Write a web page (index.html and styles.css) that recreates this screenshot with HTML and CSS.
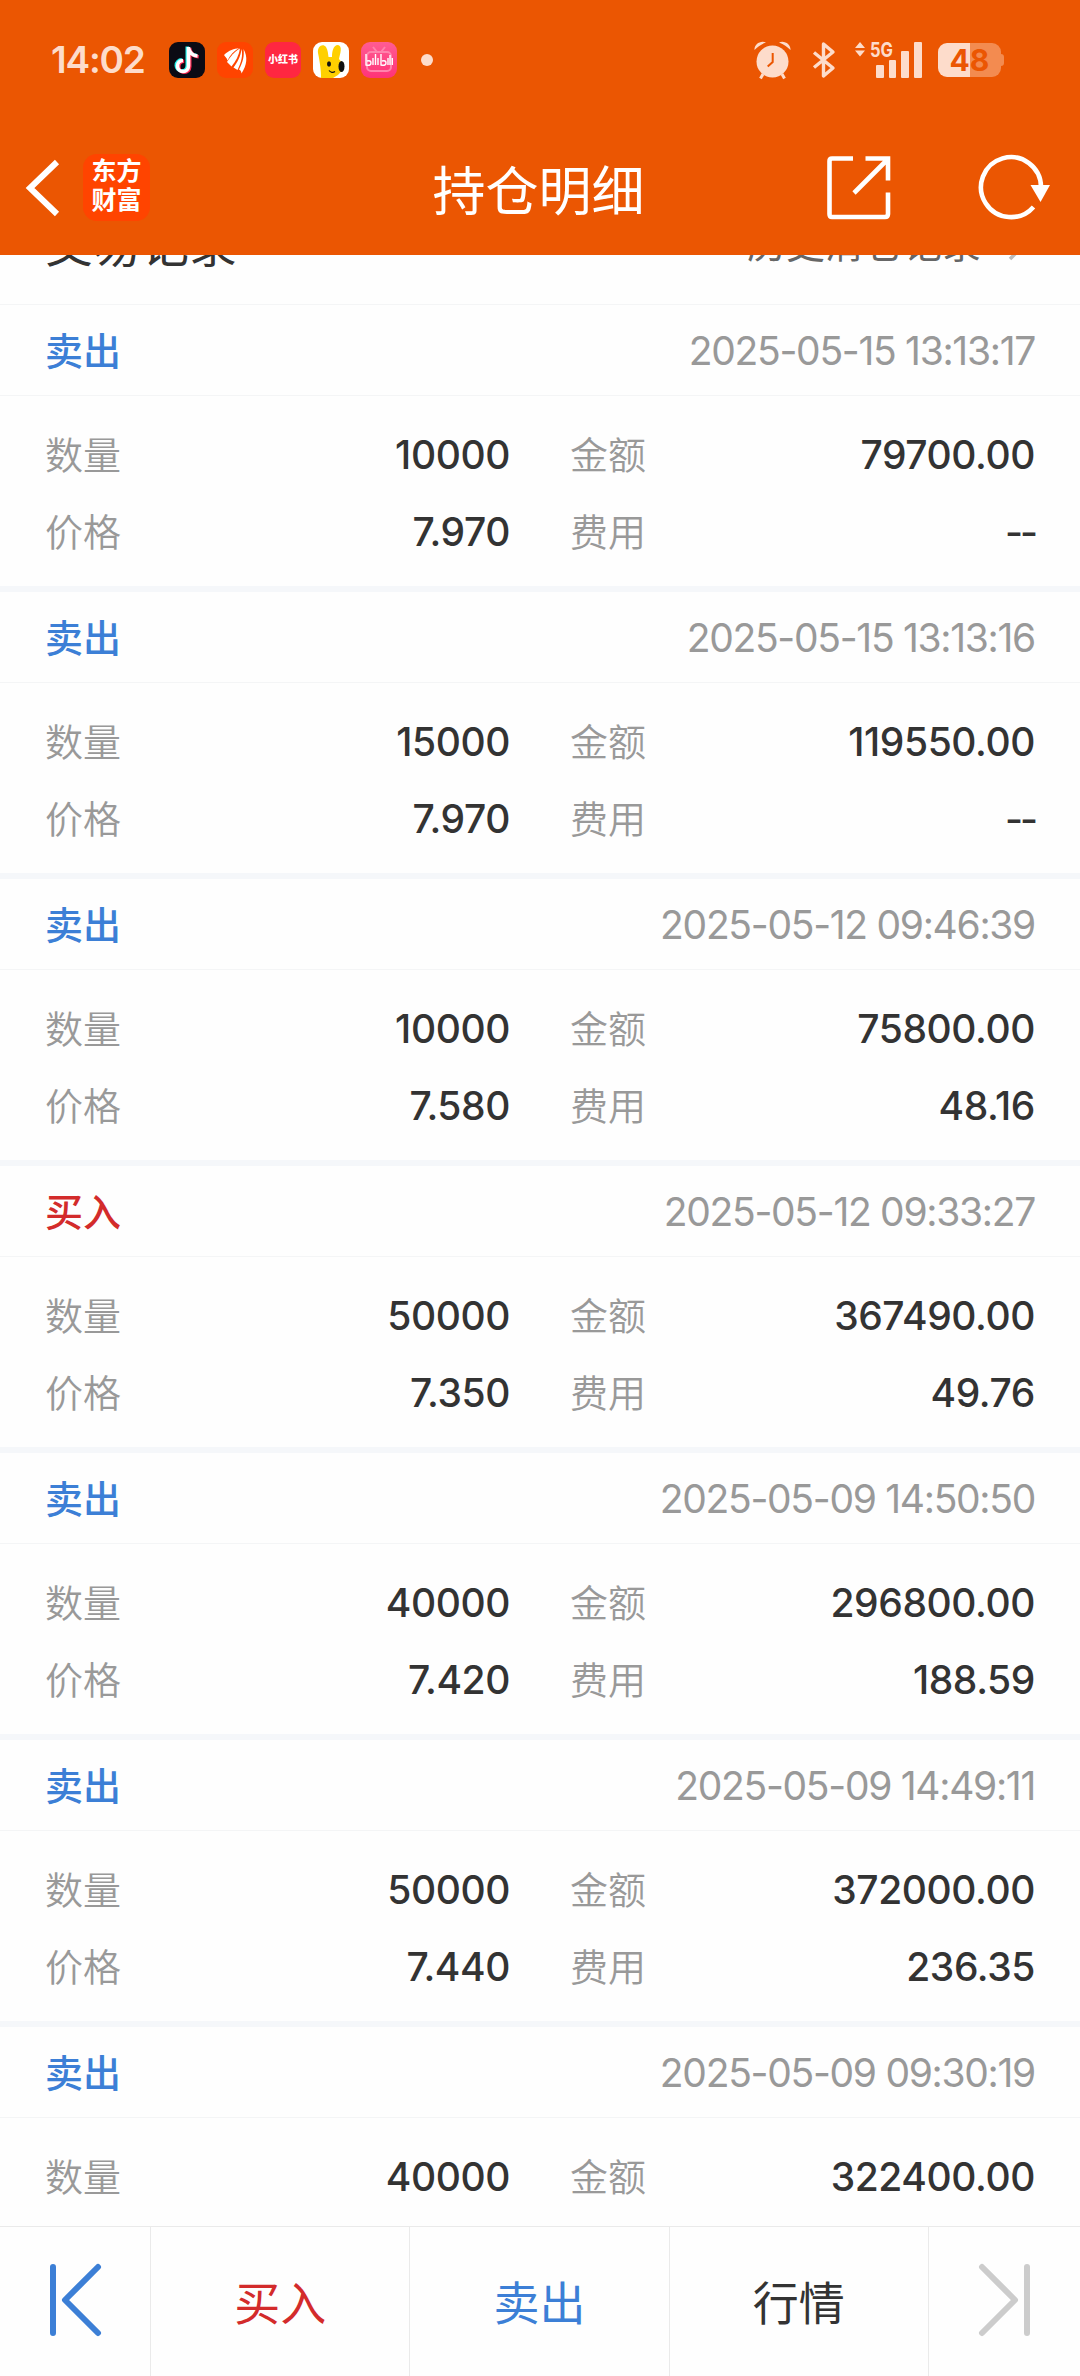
FILE: index.html
```
<!DOCTYPE html>
<html lang="zh">
<head>
    <meta charset="UTF-8">
    <meta name="viewport" content="width=device-width, initial-scale=1.0">
    <title>持仓明细</title>
    <link rel="stylesheet" href="styles.css">
</head>
<body>
    <header class="top">
        <!-- 状态栏 -->
        <div class="status-bar">
            <span class="time">14:02</span>
            <div class="apps">
                <svg viewBox="0 0 36 36">
                    <rect width="36" height="36" rx="9" fill="#0b0b14"/>
                    <g fill="none" stroke-width="3.600">
                        <path d="M19.500 5v19a5.500 5.500 0 1 1-5.500-5.500M19.500 6c1 5 4 7.500 9 8" stroke="#25f4ee" transform="translate(-1.200 -.6)"/>
                        <path d="M19.500 5v19a5.500 5.500 0 1 1-5.500-5.500M19.500 6c1 5 4 7.500 9 8" stroke="#fe2c55" transform="translate(1.200 .8)"/>
                        <path d="M19.500 5v19a5.500 5.500 0 1 1-5.500-5.500M19.500 6c1 5 4 7.500 9 8" stroke="#fff"/>
                    </g>
                </svg>
                <svg viewBox="0 0 36 36">
                    <rect width="36" height="36" rx="9" fill="#ff4400"/>
                    <g fill="#fff">
                        <path d="M7 13C12 8 17 7 22 6C17 9 13 13 10.500 18.500C10 16 8 15 7 13Z"/>
                        <path d="M23 6.500C17 10 14 14 10 20L14.500 24.500C19 19 22 13 23 6.500Z"/>
                        <path d="M24.500 7C23.500 15 20 21 16.500 25.500L20.500 28C24.500 20 26 13 24.500 7Z"/>
                        <path d="M26.500 7C31 15 30 23 24.500 31.500C24.500 29 23 28 22 27.500C26 20 27.500 14 26.500 7Z"/>
                    </g>
                </svg>
                <span class="app-red">小红书</span>
                <svg viewBox="0 0 36 36">
                    <rect width="36" height="36" rx="9" fill="#fff"/>
                    <path d="M8 36C8 28 7 21 5 11C4 4 10 1 13 5C15 8 15 12 15.500 15H19C19 10 20 3 25 3C30 4 27 12 26 17C31 22 30 29 25 33L20 36Z" fill="#ffd000"/>
                    <ellipse cx="16" cy="22" rx="2" ry="2.700" fill="#111"/>
                    <ellipse cx="28.500" cy="24.500" rx="3" ry="5.500" fill="#111"/>
                    <path d="M16 28.500c1.500 2 4 2.500 6 1" fill="none" stroke="#111" stroke-width="1.200"/>
                </svg>
                <span class="app-pink">
                    <svg viewBox="0 0 36 36">
                        <g fill="none" stroke="#ff83ac" stroke-width="2">
                            <rect x="6" y="10" width="24" height="19" rx="4"/>
                            <path d="M12 5l4 5M24 5l-4 5"/>
                        </g>
                        <g fill="none" stroke="#fff" stroke-width="1.400">
                            <path d="M5 12v11q5 1 5-2t-4-2M12 16v7M14.500 12v11M17 16v7"/>
                            <path d="M20 12v11q5 1 5-2t-4-2M27 16v7M29 13v10M31.300 16v7"/>
                        </g>
                    </svg>
                </span>
            </div>
            <i class="dot"></i>
            <div class="indicators">
                <svg class="alarm" viewBox="0 0 37 38">
                    <g fill="#fddccb">
                        <circle cx="18.500" cy="20.500" r="16"/>
                        <path d="M.5 9C0 4 6-1 12 1.500C7 3 4 6 .5 9ZM36.500 9C37 4 31-1 25 1.500C30 3 33 6 36.500 9Z"/>
                    </g>
                    <path d="M9 33l-2.500 4.500M28 33l2.500 4.500" stroke="#fddccb" stroke-width="3"/>
                    <path d="M18.700 12v9l-5 4.500" fill="none" stroke="#eb5602" stroke-width="2"/>
                </svg>
                <svg class="bluetooth" viewBox="0 0 22 36">
                    <path d="M1 10.500L20 26L10.500 34V2L20 10L1 25.500" fill="none" stroke="#fddccb" stroke-width="3.400" stroke-linejoin="round"/>
                </svg>
                <svg class="signal" viewBox="0 0 68 38">
                    <g fill="#fddccb">
                        <path d="M0 7L5 1L10 7ZM0 9.500L5 15.500L10 9.500Z"/>
                        <rect x="21" y="24" width="8" height="13" rx="1"/>
                        <rect x="34" y="19" width="7" height="18" rx="1"/>
                        <rect x="46" y="10" width="8" height="27" rx="1"/>
                        <rect x="59" y="1" width="8" height="36" rx="1"/>
                        <text class="net" x="15" y="15.500" textLength="23" lengthAdjust="spacingAndGlyphs">5G</text>
                    </g>
                </svg>
                <span class="battery">48</span>
            </div>
        </div>

        <!-- 标题栏 -->
        <div class="title-bar">
            <div class="side">
                <svg class="back" viewBox="0 0 34 56">
                    <path d="M31 2L4 28L31 54" fill="none" stroke="#fff" stroke-width="6"/>
                </svg>
                <div class="brand">东方<br>财富</div>
            </div>
            <h1>持仓明细</h1>
            <div class="side side-right">
                <svg class="share" viewBox="0 0 64 64">
                    <path d="M26 2.500H5Q2.500 2.500 2.500 5V58Q2.500 61 5 61H58Q61 61 61 58V36.500M38.500 2.500H61V24.500M27 37L60 4" fill="none" stroke="#fff" stroke-width="4.600"/>
                </svg>
                <svg class="refresh" viewBox="0 0 72 66">
                    <path d="M62 32A30 30 0 1 0 54.500 52" fill="none" stroke="#fff" stroke-width="4.600"/>
                    <path d="M51.500 30H71L61.500 47Z" fill="#fff"/>
                </svg>
            </div>
        </div>
    </header>

    <main class="content">
        <div class="section-head">
            <h2>交易记录</h2>
            <span class="history">历史清仓记录
                <svg viewBox="0 0 16 40"><path d="M2 14L14 26L2 38" fill="none" stroke="#bbb" stroke-width="3.500"/></svg>
            </span>
        </div>

        <!-- 交易记录列表 -->
        <div class="record">
            <div class="record-head"><b class="sell">卖出</b><time>2025-05-15 13:13:17</time></div>
            <dl>
                <div><dt>数量</dt><dd>10000</dd></div>
                <div><dt>金额</dt><dd>79700.00</dd></div>
                <div><dt>价格</dt><dd>7.970</dd></div>
                <div><dt>费用</dt><dd class="empty">--</dd></div>
            </dl>
        </div>
        <div class="record">
            <div class="record-head"><b class="sell">卖出</b><time>2025-05-15 13:13:16</time></div>
            <dl>
                <div><dt>数量</dt><dd>15000</dd></div>
                <div><dt>金额</dt><dd>119550.00</dd></div>
                <div><dt>价格</dt><dd>7.970</dd></div>
                <div><dt>费用</dt><dd class="empty">--</dd></div>
            </dl>
        </div>
        <div class="record">
            <div class="record-head"><b class="sell">卖出</b><time>2025-05-12 09:46:39</time></div>
            <dl>
                <div><dt>数量</dt><dd>10000</dd></div>
                <div><dt>金额</dt><dd>75800.00</dd></div>
                <div><dt>价格</dt><dd>7.580</dd></div>
                <div><dt>费用</dt><dd>48.16</dd></div>
            </dl>
        </div>
        <div class="record">
            <div class="record-head"><b class="buy">买入</b><time>2025-05-12 09:33:27</time></div>
            <dl>
                <div><dt>数量</dt><dd>50000</dd></div>
                <div><dt>金额</dt><dd>367490.00</dd></div>
                <div><dt>价格</dt><dd>7.350</dd></div>
                <div><dt>费用</dt><dd>49.76</dd></div>
            </dl>
        </div>
        <div class="record">
            <div class="record-head"><b class="sell">卖出</b><time>2025-05-09 14:50:50</time></div>
            <dl>
                <div><dt>数量</dt><dd>40000</dd></div>
                <div><dt>金额</dt><dd>296800.00</dd></div>
                <div><dt>价格</dt><dd>7.420</dd></div>
                <div><dt>费用</dt><dd>188.59</dd></div>
            </dl>
        </div>
        <div class="record">
            <div class="record-head"><b class="sell">卖出</b><time>2025-05-09 14:49:11</time></div>
            <dl>
                <div><dt>数量</dt><dd>50000</dd></div>
                <div><dt>金额</dt><dd>372000.00</dd></div>
                <div><dt>价格</dt><dd>7.440</dd></div>
                <div><dt>费用</dt><dd>236.35</dd></div>
            </dl>
        </div>
        <div class="record">
            <div class="record-head"><b class="sell">卖出</b><time>2025-05-09 09:30:19</time></div>
            <dl>
                <div><dt>数量</dt><dd>40000</dd></div>
                <div><dt>金额</dt><dd>322400.00</dd></div>
            </dl>
        </div>
    </main>

    <!-- 底部操作栏 -->
    <nav class="bottom-bar">
        <a class="sell">
            <svg viewBox="0 0 50 72"><path d="M3 3V69M48 3L15 36L48 69" fill="none" stroke="currentColor" stroke-width="6" stroke-linecap="round" stroke-linejoin="round"/></svg>
        </a>
        <a class="buy">买入</a>
        <a class="sell">卖出</a>
        <a>行情</a>
        <a class="disabled">
            <svg viewBox="0 0 50 72"><path d="M47 3V69M2 3L35 36L2 69" fill="none" stroke="currentColor" stroke-width="6" stroke-linecap="round" stroke-linejoin="round"/></svg>
        </a>
    </nav>
</body>
</html>
```
FILE: styles.css
```
* {
    margin: 0;
    padding: 0;
    box-sizing: border-box;
}

body {
    display: flex;
    flex-direction: column;
    height: 2376px;
    overflow: hidden;
    background: #fefefe;
    color: #333;
    font-family: Inter, 'Noto Sans CJK SC', sans-serif;
}

svg {
    display: block;
    flex: none;
    overflow: visible;
}

.top {
    height: 255px;
    flex: none;
    background: #eb5602;
    color: #fff;
}

/* 状态栏 */
.status-bar {
    display: flex;
    align-items: center;
    height: 120px;
    padding: 0 76px 0 51px;
}

.time {
    width: 118px;
    padding-bottom: 2px;
    color: #fddccb;
    font-size: 37px;
    font-weight: 600;
    letter-spacing: -1.2px;
}

.apps {
    display: flex;
    gap: 12px;
}

.apps > * {
    width: 36px;
    height: 36px;
}

.app-red,
.app-pink {
    border-radius: 9px;
    overflow: hidden;
}

.app-red {
    background: #ff2741;
    font-size: 10px;
    font-weight: 900;
    line-height: 35px;
    text-align: center;
    white-space: nowrap;
}

.app-pink {
    background: linear-gradient(#ff5c93, #ff3377);
}

.dot {
    width: 12px;
    height: 12px;
    margin-left: 24px;
    border-radius: 50%;
    background: #fddccb;
}

.indicators {
    display: flex;
    align-items: center;
    margin-left: auto;
}

.alarm {
    width: 37px;
    height: 38px;
    margin-right: 22px;
}

.bluetooth {
    width: 22px;
    height: 36px;
    margin-right: 20px;
}

.signal {
    width: 68px;
    height: 38px;
    margin-right: 15px;
}

.net {
    font-size: 20px;
    font-weight: 700;
}

.battery {
    position: relative;
    width: 63px;
    height: 34px;
    margin-right: 3px;
    border-radius: 9px;
    background: linear-gradient(to right, #fddccb 51%, #f38b50 51%);
    color: #eb5602;
    font-size: 30px;
    font-weight: 700;
    line-height: 35px;
    text-align: center;
}

.battery::after {
    content: '';
    position: absolute;
    top: 11px;
    right: -3px;
    width: 3px;
    height: 12px;
    border-radius: 0 3px 3px 0;
    background: #f38b50;
}

/* 标题栏 */
.title-bar {
    display: flex;
    align-items: center;
    justify-content: space-between;
    height: 135px;
    padding: 0 29px 0 26px;
}

.side {
    display: flex;
    align-items: center;
    width: 224px;
}

.side-right {
    justify-content: space-between;
}

.back {
    width: 34px;
    height: 56px;
}

.brand {
    width: 67px;
    height: 67px;
    margin-left: 23px;
    padding-top: 3px;
    border-radius: 14px;
    background: #ff4400;
    font-size: 25px;
    font-weight: 700;
    line-height: 29px;
    text-align: center;
}

h1 {
    font-size: 53px;
    font-weight: 400;
}

.share {
    width: 64px;
    height: 64px;
}

.refresh {
    width: 72px;
    height: 66px;
}

/* 列表区 */
.content {
    flex: 1;
    overflow: hidden;
}

.section-head {
    display: flex;
    align-items: center;
    justify-content: space-between;
    height: 127px;
    margin-top: -77px;
    padding: 0 56px 0 45px;
    border-bottom: 1px solid #f4f5f6;
}

h2 {
    font-size: 48px;
    font-weight: 400;
}

.history {
    display: flex;
    align-items: center;
    gap: 27px;
    color: #666;
    font-size: 39px;
}

.history svg {
    width: 16px;
    height: 40px;
}

.record {
    height: 287px;
    border-bottom: 6px solid #f5f7fa;
}

.record-head {
    display: flex;
    align-items: center;
    justify-content: space-between;
    height: 91px;
    padding: 0 45px;
    border-bottom: 1px solid #f4f5f6;
}

.record-head b {
    padding-bottom: 4px;
    font-size: 38px;
    font-weight: 500;
}

time {
    color: #999;
    font-size: 39px;
    letter-spacing: -1.3px;
}

dl {
    display: grid;
    grid-template-columns: 1fr 1fr;
    grid-auto-rows: 77px;
    column-gap: 60px;
    padding: 20px 45px 0;
}

dl div {
    display: flex;
    align-items: center;
    justify-content: space-between;
}

dt {
    padding-bottom: 5px;
    color: #999;
    font-size: 38px;
    font-weight: 350;
}

dd {
    font-size: 39px;
    font-weight: 500;
    letter-spacing: -0.4px;
}

.empty {
    letter-spacing: -3px;
}

.sell {
    color: #3c7fd6;
}

.buy {
    color: #d32b2b;
}

.disabled {
    color: #ccc;
}

/* 底部操作栏 */
.bottom-bar {
    display: grid;
    grid-template-columns: 151px 1fr 1fr 1fr 151px;
    flex: none;
    height: 150px;
    border-top: 1px solid #eaeaea;
    font-size: 46px;
}

.bottom-bar a {
    display: flex;
    align-items: center;
    justify-content: center;
    padding-bottom: 4px;
    border-right: 1px solid #eaeaea;
}

.bottom-bar a:last-child {
    border-right: none;
}

.bottom-bar svg {
    width: 50px;
    height: 72px;
}
```
